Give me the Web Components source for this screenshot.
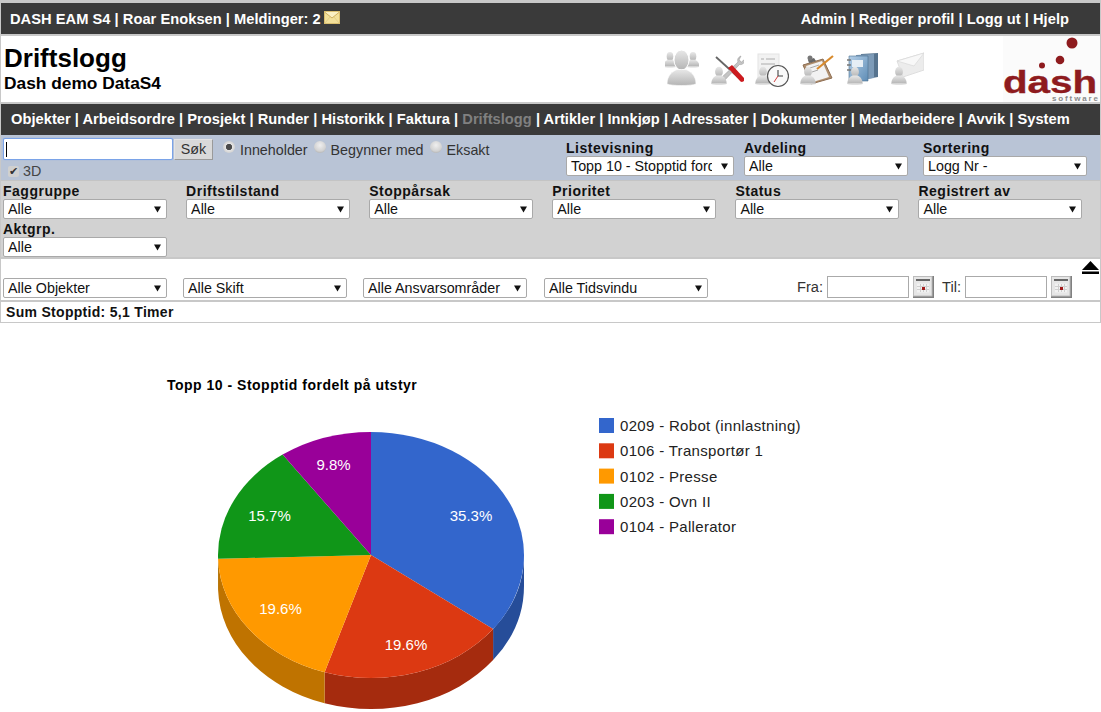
<!DOCTYPE html>
<html lang="no">
<head>
<meta charset="utf-8">
<title>Driftslogg</title>
<style>
    html, body { margin: 0; padding: 0; background: #fff; overflow: hidden; }
    body { font-family: "Liberation Sans", Arial, sans-serif; font-size: 14.67px; color: #000; width: 1101px; height: 712px; }
</style>
</head>
<body>
<dash-page>
    <dark-bar slot="top" between>
        <span>DASH EAM S4 | Roar Enoksen | Meldinger: 2 <mail-mini></mail-mini></span>
        <span class="r">Admin | Rediger profil | Logg ut | Hjelp</span>
    </dark-bar>
    <page-head slot="head" title="Driftslogg" sub="Dash demo DataS4"></page-head>
    <dark-bar slot="nav">
        <span>Objekter | Arbeidsordre | Prosjekt | Runder | Historikk | Faktura | <span style="color:#808080">Driftslogg</span> | Artikler | Innkjøp | Adressater | Dokumenter | Medarbeidere | Avvik | System</span>
    </dark-bar>
    <search-row slot="search">
        <filter-field style="--w:168px;margin-right:10px" label="Listevisning" value="Topp 10 - Stopptid fordelt på utstyr"></filter-field>
        <filter-field style="margin-right:15px" label="Avdeling" value="Alle"></filter-field>
        <filter-field label="Sortering" value="Logg Nr -"></filter-field>
    </search-row>
    <filter-grid slot="filters">
        <filter-field label="Faggruppe" value="Alle"></filter-field>
        <filter-field label="Driftstilstand" value="Alle"></filter-field>
        <filter-field label="Stoppårsak" value="Alle"></filter-field>
        <filter-field label="Prioritet" value="Alle"></filter-field>
        <filter-field label="Status" value="Alle"></filter-field>
        <filter-field label="Registrert av" value="Alle"></filter-field>
        <filter-field label="Aktgrp." value="Alle"></filter-field>
    </filter-grid>
    <scope-row slot="scope"></scope-row>
    <sum-row slot="sum">Sum Stopptid: 5,1 Timer</sum-row>
    <pie-chart slot="chart" heading="Topp 10 - Stopptid fordelt på utstyr"></pie-chart>
</dash-page>

<script>
customElements.define('dash-page', class extends HTMLElement {
    connectedCallback() {
        this.attachShadow({ mode: "open" });
        this.shadowRoot.innerHTML = `
            <style>
                :host { display: block; }
                .box {
                    border: 1px solid #c8c8c8;
                    border-top-width: 3px;
                    border-bottom-width: 1px;
                    width: 1099px;
                }
                .sep { height: 2px; background: #c8c8c8; }
                .sep1 { height: 1px; background: #c4c4c4; }
            </style>
            <div class="box">
                <slot name="top"></slot>
                <div class="sep"></div>
                <slot name="head"></slot>
                <div class="sep"></div>
                <slot name="nav"></slot>
                <slot name="search"></slot>
                <div class="sep1"></div>
                <slot name="filters"></slot>
                <div class="sep"></div>
                <slot name="scope"></slot>
                <div class="sep"></div>
                <slot name="sum"></slot>
            </div>
            <slot name="chart"></slot>
        `
    }
})

customElements.define('dark-bar', class extends HTMLElement {
    connectedCallback() {
        this.attachShadow({ mode: "open" });
        this.shadowRoot.innerHTML = `
            <style>
                :host {
                    display: flex;
                    justify-content: space-between;
                    align-items: center;
                    background: #3a3a3a;
                    color: #fff;
                    font-weight: 700;
                    font-size: 14.67px;
                    letter-spacing: .03px;
                    height: 31px;
                    padding: 0 31px 0 10px;
                    box-sizing: border-box;
                    white-space: nowrap;
                }
                :host([between]) { padding-left: 9px; }
                :host(:not([between])) { padding-bottom: 2px; }
            </style>
            <slot></slot>
        `
    }
})

customElements.define('mail-mini', class extends HTMLElement {
    connectedCallback() {
        this.attachShadow({ mode: "open" });
        this.shadowRoot.innerHTML = `
            <style>:host { display: inline-block; width: 16px; height: 13px; vertical-align: 0; margin-left: -1px; }</style>
            <svg width="16" height="13" viewBox="0 0 16 13">
                <rect x=".5" y=".5" width="15" height="12" fill="#f3e09a" stroke="#dcc070"/>
                <path d="M.5 1 8 7l7.500-6" fill="#fbf0c4" stroke="#cfb060"/>
                <path d="M1 12 6 6M15 12l-5-6" fill="none" stroke="#e4cf88"/>
            </svg>
        `
    }
})

customElements.define('desk-icon', class extends HTMLElement {
    static person(x, y, s = 1) {
        return `<g transform="translate(${x} ${y}) scale(${s})">
            <ellipse cx="0" cy="-5" rx="4.600" ry="6" fill="url(#g)"/>
            <path d="M-9 9c0-6 4-9 6.500-9.500h5C5 0 9 3 9 9z" fill="url(#g)"/>
            <ellipse cx="0" cy="9.300" rx="9" ry="1" fill="#d8d8d8"/>
        </g>`;
    }
    connectedCallback() {
        this.attachShadow({ mode: "open" });
        const x = +this.getAttribute('x');
        const art = desk_icons[this.getAttribute('kind')]();
        this.shadowRoot.innerHTML = `
            <style>:host { display: block; width: 34px; height: 40px; } svg { display: block; filter: blur(.5px); }</style>
            <svg width="34" height="40" viewBox="${x} 50 34 40">
                <defs>
                    <linearGradient id="g" x1="0" y1="0" x2="0" y2="1">
                        <stop offset="0" stop-color="#e8e8e8"/><stop offset="1" stop-color="#b4b4b4"/>
                    </linearGradient>
                    <linearGradient id="b" x1="0" y1="0" x2="1" y2="1">
                        <stop offset="0" stop-color="#b4cfe8"/><stop offset="1" stop-color="#5f8db6"/>
                    </linearGradient>
                </defs>
                ${art}
            </svg>
        `
    }
})

const P = (x, y, s) => customElements.get('desk-icon').person(x, y, s);
const desk_icons = {
    users: () => `
        ${P(669, 60, .72)}${P(692, 60, .72)}
        <ellipse cx="680.500" cy="60" rx="7.500" ry="10" fill="url(#g)" stroke="#fff"/>
        <path d="M666 84c0-9 6-13 10-14.500h9c4 1.500 10 5.500 10 14.500-5 2-24 2-29 0z" fill="url(#g)" stroke="#fff" stroke-width=".6"/>`,
    tools: () => `
        <path d="M715 57l22 20" stroke="#666" stroke-width="1.800"/>
        <path d="M719 79l18-17c-1-3 .5-5 3-6l-2 4 2.500 2 3.500-3c.5 3.500-2.500 6-5.500 5.500L722 82z" fill="#c4c4c4" stroke="#909090" stroke-width=".5"/>
        <path d="M727 68l4-3 12 13c1.500 2-1 5-3.500 3.500z" fill="#cc1a1e"/>
        ${P(718, 76, .85)}`,
    clock: () => `
        <rect x="757" y="54" width="21" height="26" fill="#f2f2f2" stroke="#e4e4e4"/>
        <path d="M760 59h3M765 59h9M760 64h14" stroke="#c4c4c4" stroke-width="1.400"/>
        ${P(762, 76, .85)}
        <circle cx="777" cy="76" r="10.500" fill="#fafafa" stroke="#555" stroke-width="1.200"/>
        <path d="M777 70v6h5" fill="none" stroke="#444" stroke-width="1.100"/>
        <path d="M777 76l-4 6" stroke="#d04040"/>`,
    clipboard: () => `
        <path d="M802 65l20-6 9 19-21 6z" fill="#b09070" stroke="#8c6c50"/>
        <path d="M805 66l16-5 7 16-16 5z" fill="#f2f2f2"/>
        <path d="M807 60l6-2 2 3-7 2z" fill="#666"/>
        <circle cx="809" cy="58" r="2.500" fill="#777"/>
        <path d="M809 68l9-3M811 72l6-2" stroke="#aaa"/>
        <path d="M832 56l-16 13" stroke="#d88a2c" stroke-width="2.200"/>
        ${P(807, 76, .85)}`,
    binder: () => `
        <path d="M860 54l17-1v24l-17 3z" fill="#56738e"/>
        <path d="M855 55l18-1v24l-18 3z" fill="#7d9bb8"/>
        <path d="M848 56h19v25h-19z" fill="url(#b)" stroke="#4c6e8e" stroke-width=".6"/>
        <rect x="851" y="60" width="11" height="7" fill="#e6eef5"/>
        <path d="M846 60h4M846 65h4M846 70h4" stroke="#777" stroke-width="1.400"/>
        ${P(854, 76, .85)}`,
    mail: () => `
        <path d="M896 61l27-8v17l-21 7z" fill="#ececec" stroke="#dedede"/>
        <path d="M896 61l17 5 10-13z" fill="#f8f8f8" stroke="#d8d8d8" stroke-width=".7"/>
        ${P(898, 76, .85)}`
};

customElements.define('dash-logo', class extends HTMLElement {
    connectedCallback() {
        this.attachShadow({ mode: "open" });
        this.shadowRoot.innerHTML = `
            <style>:host { display: block; width: 97px; height: 66px; } svg { display: block; }</style>
            <svg width="97" height="66" viewBox="1003 36 97 66">
                <rect x="1003" y="36" width="97" height="66" fill="#fbfbfb"/>
                <circle cx="1072" cy="43" r="5.500" fill="#8e1b1e"/>
                <circle cx="1060" cy="60" r="4.300" fill="#8e1b1e"/>
                <circle cx="1042" cy="65.500" r="3" fill="#8e1b1e"/>
                <text x="1003" y="93" font-family="Liberation Sans" font-size="32" fill="#8e1b1e" stroke="#8e1b1e" stroke-width=".4" textLength="94" lengthAdjust="spacingAndGlyphs">dash</text>
                <text x="1052" y="101" font-family="Liberation Sans" font-weight="700" font-size="8" fill="#8a8a8a" textLength="46" lengthAdjust="spacing">software</text>
            </svg>
        `
    }
})

customElements.define('page-head', class extends HTMLElement {
    connectedCallback() {
        this.attachShadow({ mode: "open" });
        this.shadowRoot.innerHTML = `
            <style>
                :host {
                    display: flex;
                    height: 66px;
                    background: #fff;
                    font-weight: 700;
                }
                .t { flex: 1; padding: 7px 0 0 3px; }
                h1 { margin: 0; font-size: 26px; line-height: 31px; }
                h2 { margin: 0; font-size: 17.33px; line-height: 19px; }
                .ic { display: flex; gap: 11px; margin-top: 14px; margin-right: 79px; }
            </style>
            <div class="t">
                <h1>${this.getAttribute('title')}</h1>
                <h2>${this.getAttribute('sub')}</h2>
            </div>
            <div class="ic">
                <desk-icon x="664" kind="users"></desk-icon>
                <desk-icon x="709" kind="tools"></desk-icon>
                <desk-icon x="754" kind="clock"></desk-icon>
                <desk-icon x="799" kind="clipboard"></desk-icon>
                <desk-icon x="844" kind="binder"></desk-icon>
                <desk-icon x="889" kind="mail"></desk-icon>
            </div>
            <dash-logo></dash-logo>
        `
    }
})

customElements.define('dash-select', class extends HTMLElement {
    connectedCallback() {
        this.attachShadow({ mode: "open" });
        const arrow = "data:image/svg+xml," + encodeURIComponent('<svg xmlns="http://www.w3.org/2000/svg" width="7" height="7"><path d="M0 .5h7L3.500 6.500z" fill="#111"/></svg>');
        this.shadowRoot.innerHTML = `
            <style>
                :host { display: block; width: var(--w, 164px); }
                select {
                    appearance: none;
                    -webkit-appearance: none;
                    display: block;
                    box-sizing: border-box;
                    width: 100%;
                    height: 20px;
                    margin: 0;
                    border: 1px solid #a9a9a9;
                    border-radius: 2px;
                    background: #fff url('${arrow}') no-repeat right 5px center;
                    padding: 0 21px 0 4px;
                    font: 14.3px "Liberation Sans", Arial, sans-serif;
                    color: #111;
                }
            </style>
            <select><option>${this.getAttribute('value')}</option></select>
        `
    }
})

customElements.define('filter-field', class extends HTMLElement {
    connectedCallback() {
        this.attachShadow({ mode: "open" });
        this.shadowRoot.innerHTML = `
            <style>
                :host { display: block; width: var(--w, 164px); }
                div {
                    font: 700 14px/16px "Liberation Sans", Arial, sans-serif;
                    letter-spacing: .5px;
                    padding-top: 1px;
                    color: #111;
                    white-space: nowrap;
                }
            </style>
            <div>${this.getAttribute('label')}</div>
            <dash-select value="${this.getAttribute('value')}"></dash-select>
        `
    }
})

customElements.define('search-row', class extends HTMLElement {
    connectedCallback() {
        this.attachShadow({ mode: "open" });
        this.shadowRoot.innerHTML = `
            <style>
                :host {
                    display: flex;
                    height: 45px;
                    background: #b9c4d6;
                    box-sizing: border-box;
                    padding: 4px 0 0 2px;
                    color: #333;
                    font-size: 14.3px;
                }
                .left { flex: 0 0 563px; margin-top: -1px; }
                .line { display: flex; align-items: center; }
                input {
                    box-sizing: border-box;
                    width: 170px;
                    height: 22px;
                    margin: 0 1px 0 0;
                    border: 1px solid #7aa3e8;
                    border-radius: 2px;
                    background: linear-gradient(#000, #000) no-repeat 2px center / 1px 15px, #fff;
                    outline: 0;
                    box-shadow: 0 0 1px #7aa3e8;
                }
                button {
                    width: 39px;
                    height: 21px;
                    margin: 0 10px 0 0;
                    padding: 0;
                    border: 1px solid;
                    border-color: #e4e4e4 #9a9a9a #9a9a9a #e4e4e4;
                    background: #d9d9d9;
                    font: 14.3px "Liberation Sans", Arial, sans-serif;
                    color: #333;
                }
                .o {
                    width: 12px;
                    height: 12px;
                    border-radius: 50%;
                    margin: -4px 5px 0 0;
                    background: radial-gradient(circle at 50% 35%, #efefef, #d2d2d2 60%, #9a9a9a);
                    flex: none;
                }
                .o.on { background: radial-gradient(circle, #4a4a4a 0 2.800px, #e4e4e4 3.500px, #d2d2d2 70%, #9a9a9a); }
                .t { margin-right: 6px; padding-top: 1px; }
                .chk { display: flex; align-items: center; margin: 3px 0 0 5px; color: #444; }
                .box {
                    display: flex;
                    align-items: center;
                    justify-content: center;
                    width: 11px;
                    height: 11px;
                    margin-right: 4px;
                    border-radius: 2px;
                    background: #d0d0d0;
                    font-size: 11px;
                    color: #333;
                }
            </style>
            <div class="left">
                <div class="line">
                    <input type="text">
                    <button>Søk</button>
                    <span class="o on"></span><span class="t">Inneholder</span>
                    <span class="o"></span><span class="t">Begynner med</span>
                    <span class="o"></span><span class="t">Eksakt</span>
                </div>
                <div class="chk"><span class="box">✔</span>3D</div>
            </div>
            <slot></slot>
        `
    }
})

customElements.define('filter-grid', class extends HTMLElement {
    connectedCallback() {
        this.attachShadow({ mode: "open" });
        this.shadowRoot.innerHTML = `
            <style>
                :host {
                    display: grid;
                    grid-template-columns: repeat(6, 183.100px);
                    grid-auto-rows: 38px;
                    align-content: start;
                    height: 76px;
                    box-sizing: border-box;
                    padding: 1px 0 0 2px;
                    background: #d2d2d2;
                }
            </style>
            <slot></slot>
        `
    }
})

customElements.define('cal-button', class extends HTMLElement {
    connectedCallback() {
        this.attachShadow({ mode: "open" });
        this.shadowRoot.innerHTML = `
            <style>:host { display: block; width: 21px; height: 22px; } svg { display: block; }</style>
            <svg width="21" height="22" viewBox="0 0 21 22">
                <rect x="0" y="0" width="21" height="22" fill="#808080"/>
                <rect x=".5" y=".5" width="18.500" height="19.500" fill="#e6e6e6" stroke="#bcbcbc"/>
                <rect x="3" y="3" width="14" height="2" fill="#666"/>
                <rect x="4" y="7.500" width="12" height="9" fill="#f2f2f2"/>
                <path d="M7.500 8v8M10.500 8v8M13.500 8v8M4 10.500h12M4 13.500h12" stroke="#cfcfcf"/>
                <rect x="9" y="11" width="3" height="3" fill="#a11c1c"/>
            </svg>
        `
    }
})

customElements.define('scope-row', class extends HTMLElement {
    connectedCallback() {
        this.attachShadow({ mode: "open" });
        this.shadowRoot.innerHTML = `
            <style>
                :host {
                    display: flex;
                    align-items: flex-end;
                    height: 41px;
                    box-sizing: border-box;
                    padding: 0 1px 2px 2px;
                    background: #fff;
                    color: #333;
                    font-size: 14.67px;
                }
                dash-select { margin-right: 16px; }
                dash-select:nth-of-type(3) { margin-right: 17px; }
                .end { display: flex; align-items: center; margin-left: 73px; }
                .end span { margin-right: 4px; }
                input {
                    box-sizing: border-box;
                    width: 82px;
                    height: 22px;
                    margin: 0 4px 0 0;
                    border: 1px solid #aaa;
                    background: #fff;
                }
                cal-button { margin-right: 8px; }
                cal-button:last-child { margin-right: 0; }
                .eject { align-self: flex-start; margin: 2px 0 0 auto; display: block; }
            </style>
            <dash-select value="Alle Objekter"></dash-select>
            <dash-select value="Alle Skift"></dash-select>
            <dash-select value="Alle Ansvarsområder"></dash-select>
            <dash-select value="Alle Tidsvindu"></dash-select>
            <div class="end">
                <span>Fra:</span><input type="text"><cal-button></cal-button>
                <span>Til:</span><input type="text"><cal-button></cal-button>
            </div>
            <svg class="eject" width="17" height="13" viewBox="0 0 17 13"><path d="M8.500 0l8.500 9H0z" fill="#000"/><rect y="10.500" width="17" height="2.500"/></svg>
        `
    }
})

customElements.define('sum-row', class extends HTMLElement {
    connectedCallback() {
        this.attachShadow({ mode: "open" });
        this.shadowRoot.innerHTML = `
            <style>
                :host {
                    display: block;
                    height: 20px;
                    line-height: 20px;
                    padding-left: 5px;
                    font-weight: 700;
                    font-size: 14px;
                    letter-spacing: .3px;
                    color: #111;
                }
            </style>
            <slot></slot>
        `
    }
})

customElements.define('pie-chart', class extends HTMLElement {
    connectedCallback() {
        this.attachShadow({ mode: "open" });
        const data = [
            ['0209 - Robot (innlastning)', 18, '#3366cc', '#264d99', '35.3%', 471, 521],
            ['0106 - Transportør 1', 10, '#dc3912', '#a52b0e', '19.6%', 406, 650],
            ['0102 - Presse', 10, '#ff9900', '#bf7300', '19.6%', 280.500, 614],
            ['0203 - Ovn II', 8, '#109618', '#0c7012', '15.7%', 269.500, 521],
            ['0104 - Pallerator', 5, '#990099', '#720072', '9.8%', 333.500, 470],
        ];
        const cx = 371, cy = 555, rx = 153, ry = 123, depth = 31;
        const total = data.reduce((a, d) => a + d[1], 0);
        const pt = (t, dy = 0) => `${(cx + rx * Math.sin(t)).toFixed(2)} ${(cy - ry * Math.cos(t) + dy).toFixed(2)}`;
        let sides = '', tops = '', labels = '', legend = '', t = 0;
        data.forEach((d, i) => {
            const a0 = t, a1 = t + d[1] / total * Math.PI * 2;
            const big = a1 - a0 > Math.PI ? 1 : 0;
            tops += `<path d="M${cx} ${cy}L${pt(a0)}A${rx} ${ry} 0 ${big} 1 ${pt(a1)}Z" fill="${d[2]}"/>`;
            const s0 = Math.max(a0, Math.PI / 2), s1 = Math.min(a1, Math.PI * 1.5);
            if (s1 > s0) {
                sides += `<path d="M${pt(s0)}A${rx} ${ry} 0 0 1 ${pt(s1)}L${pt(s1, depth)}A${rx} ${ry} 0 0 0 ${pt(s0, depth)}Z" fill="${d[3]}"/>`;
            }
            labels += `<text x="${d[5]}" y="${d[6]}" text-anchor="middle" fill="#fff" font-size="15">${d[4]}</text>`;
            const ly = 418 + i * 25.300;
            legend += `<rect x="599" y="${ly}" width="15" height="15" fill="${d[2]}"/>
                <text x="620" y="${ly + 13}" fill="#222" font-size="15" letter-spacing=".32">${d[0]}</text>`;
            t = a1;
        });
        this.shadowRoot.innerHTML = `
            <style>
                :host { display: block; }
                svg { display: block; font-family: "Liberation Sans", Arial, sans-serif; }
            </style>
            <svg width="1101" height="389" viewBox="0 323 1101 389">
                <text x="167" y="390" font-size="14" font-weight="700" letter-spacing=".5" fill="#000">${this.getAttribute('heading')}</text>
                ${sides}${tops}${labels}${legend}
            </svg>
        `
    }
})
</script>
</body>
</html>
